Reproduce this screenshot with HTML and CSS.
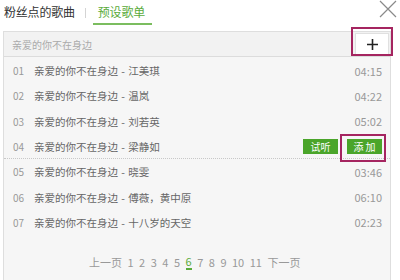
FILE: index.html
```html
<!DOCTYPE html>
<html>
	<head>
		<meta charset="UTF-8">
		<title>预设歌单</title>
		<link rel="stylesheet" href="styles.css">
	</head>
	<body>
		<div id="wrap">
			<div class="head">
				<div class="tab">粉丝点的歌曲</div>
				<span class="sep"></span>
				<div class="tab active">预设歌单</div>
				<span class="close">
					<svg width="18" height="18" viewBox="0 0 18 18"><path d="M1 1L17 17M17 1L1 17" stroke="#8a8a8a" stroke-width="1.2" fill="none"/></svg>
				</span>
			</div>
			<div class="panel">
				<div class="search">
					<span class="query">亲爱的你不在身边</span>
					<span class="add-btn">
						<svg width="11" height="11" viewBox="0 0 11 11"><path d="M5.5 0V11M0 5.5H11" stroke="#222" stroke-width="1.6" fill="none"/></svg>
					</span>
				</div>
				<ul class="list">
					<li><span class="num">01</span><span class="title">亲爱的你不在身边 - 江美琪</span><span class="time">04:15</span></li>
					<li><span class="num">02</span><span class="title">亲爱的你不在身边 - 温岚</span><span class="time">04:22</span></li>
					<li><span class="num">03</span><span class="title">亲爱的你不在身边 - 刘若英</span><span class="time">05:02</span></li>
					<li class="hover"><span class="num">04</span><span class="title">亲爱的你不在身边 - 梁静如</span><span class="btn">试听</span><span class="btn">添 加</span></li>
					<li><span class="num">05</span><span class="title">亲爱的你不在身边 - 晓雯</span><span class="time">03:46</span></li>
					<li><span class="num">06</span><span class="title">亲爱的你不在身边 - 傅薇，黄中原</span><span class="time">06:10</span></li>
					<li><span class="num">07</span><span class="title">亲爱的你不在身边 - 十八岁的天空</span><span class="time">02:23</span></li>
				</ul>
				<div class="pager">
					<span>上一页</span>
					<span>1</span><span>2</span><span>3</span><span>4</span><span>5</span>
					<span class="cur">6</span>
					<span>7</span><span>8</span><span>9</span><span>10</span><span>11</span>
					<span>下一页</span>
				</div>
			</div>
			<div class="mark mark-plus"></div>
			<div class="mark mark-add"></div>
		</div>
	</body>
</html>
```

FILE: styles.css
```css
body {
	margin: 0;
	background: #fff;
	font-family: "Noto Sans CJK SC", "Noto Sans", sans-serif;
}
ul {
	margin: 0;
	padding: 0;
	list-style: none;
}
#wrap {
	position: relative;
	width: 400px;
	height: 280px;
	overflow: hidden;
}
.head {
	height: 31px;
	display: flex;
	align-items: flex-start;
	padding-left: 4px;
}
.tab {
	font-size: 12px;
	line-height: 14px;
	padding-top: 5px;
	color: #333;
	letter-spacing: -0.2px;
}
.tab.active {
	color: #5aab3a;
	padding: 5px 7px 0 5px;
	height: 18px;
	border-bottom: 2px solid #7bbd5f;
}
.sep {
	width: 1px;
	height: 10px;
	margin: 8px 7px 0 10px;
	background: #d4d4d4;
}
.close {
	margin-left: auto;
	margin-right: 3px;
	display: block;
	line-height: 0;
}
.panel {
	margin-left: 3px;
	width: 386px;
	height: 249px;
	border: 1px solid #dedede;
	border-bottom: 0;
	background: #f6f6f6;
}
.search {
	height: 24px;
	display: flex;
	align-items: center;
	padding-left: 8px;
	border-bottom: 1px solid #dcdcdc;
	background: #f2f2f2;
	font-size: 10px;
	color: #aaa;
}
.add-btn {
	margin-left: auto;
	margin-right: 1px;
	width: 32px;
	height: 20px;
	background: #fff;
	border: 1px solid #e0e0e0;
	display: flex;
	align-items: center;
	justify-content: center;
	line-height: 0;
}
.list {
	padding-top: 1px;
}
.list li {
	height: 25.3px;
	display: flex;
	align-items: center;
	padding: 0 8px 0 9px;
	font-size: 10.5px;
	color: #666;
	box-sizing: border-box;
}
.list li.hover {
	border-bottom: 1px dotted #c8c8c8;
}
.num {
	width: 21px;
	color: #999;
	font-size: 10px;
}
.title {
	flex: 1;
	word-spacing: 1px;
}
.time {
	font-size: 11px;
	color: #999;
}
.btn {
	width: 35px;
	height: 15px;
	margin-left: 9px;
	background: #4aa52a;
	color: #fff;
	font-size: 10px;
	display: flex;
	align-items: center;
	justify-content: center;
}
.pager {
	display: flex;
	gap: 5.5px;
	padding: 19px 0 0 85px;
	font-size: 11px;
	color: #999;
}
.pager .cur {
	color: #5aab3a;
	border-bottom: 2px solid #5aab3a;
	line-height: 14px;
}
.mark {
	position: absolute;
	border: 2.5px solid #a52560;
}
.mark-plus {
	left: 351px;
	top: 27px;
	width: 38px;
	height: 25px;
}
.mark-add {
	left: 340px;
	top: 134px;
	width: 42px;
	height: 24px;
}
```
